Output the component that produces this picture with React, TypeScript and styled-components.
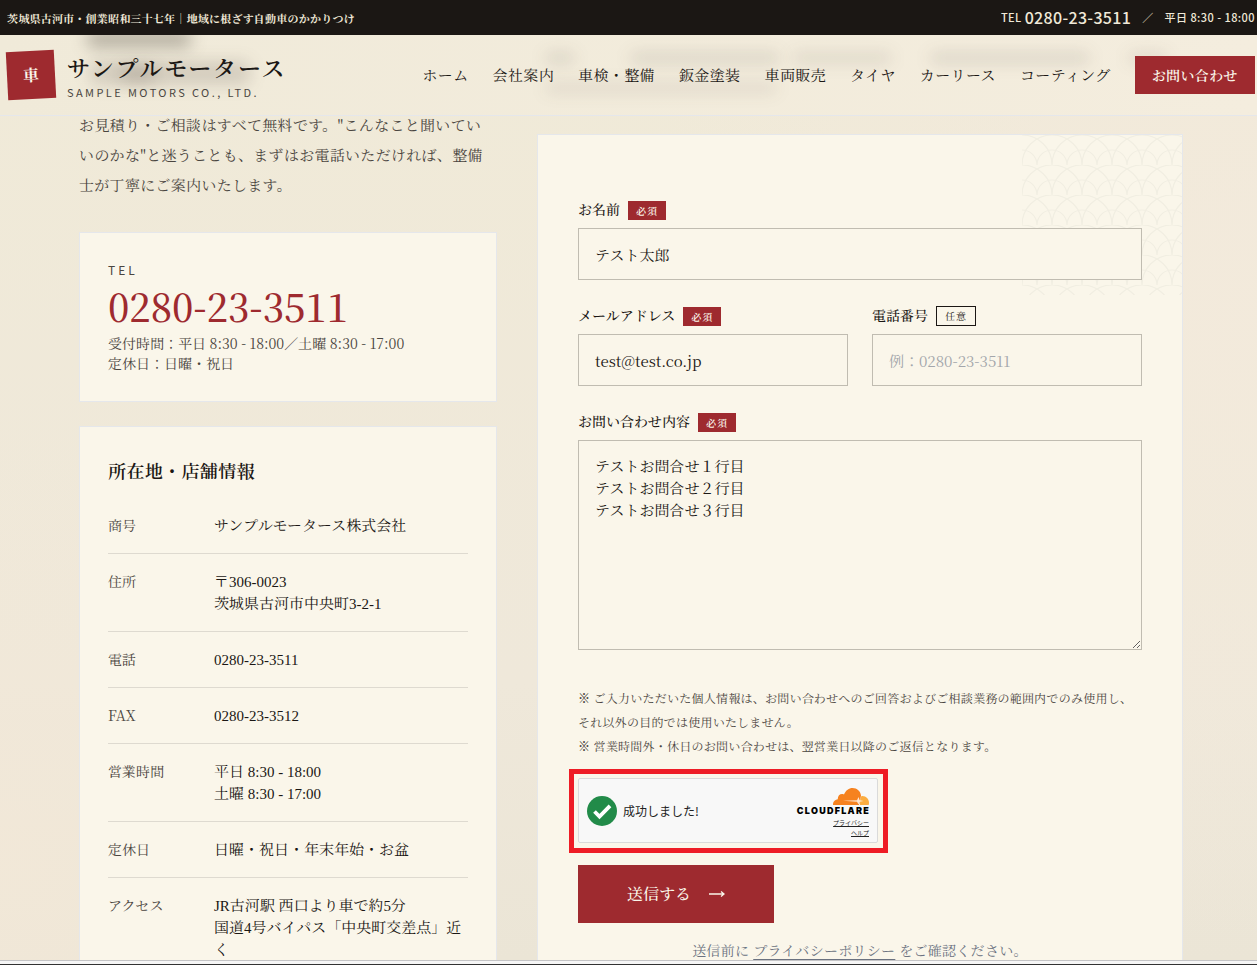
import React from 'react';
import styled, { createGlobalStyle } from 'styled-components';

const serif = `"Noto Serif JP", "Noto Serif CJK JP", "Liberation Serif", "Noto Sans CJK JP", serif`;
const tableSerif = `"Liberation Serif", "Noto Serif JP", "Noto Serif CJK JP", "Noto Sans CJK JP", serif`;
const sans = `"Noto Sans CJK JP", "Noto Sans", sans-serif`;

const c = {
  ink: '#1b1714',
  soft: '#4a4540',
  red: '#9e2a2f',
  paper: '#faf6ea',
  edge: '#e5e7eb',
  line: '#dedad0',
  field: '#c0bcb1',
};

const GlobalStyle = createGlobalStyle`
  * { box-sizing: border-box; }
  body { margin: 0; font-family: ${serif}; color: ${c.ink}; background: #f0e9d8; }
  h2, p, dl, dd { margin: 0; }
  a { color: inherit; text-decoration: none; }
`;

const Page = styled.div`
  display: flex;
  flex-direction: column;
  height: 100vh;
`;

const TopBar = styled.div`
  flex: none;
  display: flex;
  justify-content: space-between;
  align-items: center;
  height: 35px;
  padding: 0 2px 0 7px;
  background: ${c.ink};
  color: #f0e9d8;
  font: 700 11px/16px ${serif};
  letter-spacing: 0.02em;
  white-space: nowrap;
`;

const TopContact = styled.div`
  display: flex;
  align-items: center;
  gap: 3px;
  padding-bottom: 2px;
  font-family: ${sans};
  font-weight: 500;
  letter-spacing: 0.04em;
  a { font-size: 16px; line-height: 20px; letter-spacing: 0.02em; }
`;

const Slash = styled.span`
  margin: 0 8px;
`;

const Stage = styled.div`
  position: relative;
  flex: 1;
  overflow: hidden;
  background:
    radial-gradient(circle at 0% 90%, rgba(242, 232, 216, 0.9), transparent 30%),
    radial-gradient(circle at 100% 30%, rgba(243, 234, 220, 0.9), transparent 45%),
    linear-gradient(180deg, #f0ead8, #efe8da 70%, #ebe5d6);
`;

const Header = styled.header`
  position: absolute;
  inset: 0 0 auto 0;
  z-index: 2;
  display: flex;
  justify-content: space-between;
  align-items: center;
  height: 81px;
  padding: 0 2px 0 7px;
  border-bottom: 1px solid ${c.edge};
  background: linear-gradient(90deg, #f0ead9, #f4edde);
  white-space: nowrap;
  overflow: hidden;
`;

const Smudge = styled.span<{ $x: number; $y: number; $w: number; $h: number; $a: number }>`
  position: absolute;
  left: ${p => p.$x}px;
  top: ${p => p.$y}px;
  width: ${p => p.$w}px;
  height: ${p => p.$h}px;
  border-radius: 8px;
  background: rgba(60, 52, 44, ${p => p.$a});
  filter: blur(8px);
`;

const Brand = styled.a`
  position: relative;
  display: flex;
  align-items: center;
  gap: 12px;
`;

const Seal = styled.span`
  display: grid;
  place-items: center;
  width: 48px;
  height: 48px;
  background: ${c.red};
  color: #faf6ea;
  font: 700 16px/24px ${serif};
  transform: rotate(-3deg);
`;

const BrandText = styled.span`
  display: flex;
  flex-direction: column;
  padding-top: 4px;
`;

const BrandName = styled.span`
  font: 600 23px/30px ${serif};
  letter-spacing: 0.08em;
`;

const BrandSub = styled.span`
  font: 400 11px/18px ${sans};
  letter-spacing: 0.22em;
  color: ${c.soft};
`;

const Nav = styled.nav`
  position: relative;
  display: flex;
  align-items: center;
  gap: 24px;
  font-size: 15px;
  line-height: 20px;
  letter-spacing: 0.025em;
`;

const NavButton = styled.a`
  padding: 9px 17px;
  background: ${c.red};
  color: #faf6ea;
  font-size: 14px;
  font-weight: 600;
`;

const Main = styled.main`
  display: grid;
  grid-template-columns: minmax(0, 11fr) minmax(0, 17fr);
  gap: 40px;
  padding: 75px 74px 0 79px;
`;

const Side = styled.div``;

const Lead = styled.p`
  margin-bottom: 32px;
  padding-right: 8px;
  font-size: 15px;
  line-height: 30px;
  letter-spacing: 0.02em;
  color: ${c.soft};
`;

const Card = styled.section`
  margin-bottom: 24px;
  padding: 28px;
  border: 1px solid ${c.edge};
  background: ${c.paper};
`;

const TelLabel = styled.p`
  font: 400 12px/18px ${sans};
  letter-spacing: 0.25em;
  color: ${c.soft};
`;

const TelNumber = styled.a`
  display: block;
  font-size: 38px;
  font-weight: 500;
  line-height: 54px;
  color: ${c.red};
`;

const Hours = styled.p`
  font-size: 14px;
  line-height: 20px;
  color: ${c.soft};
`;

const CardTitle = styled.h2`
  margin-bottom: 13px;
  font-size: 18px;
  font-weight: 600;
  line-height: 30px;
  letter-spacing: 0.02em;
`;

const InfoRow = styled.dl`
  display: grid;
  grid-template-columns: 90px 1fr;
  gap: 16px;
  padding: 17px 0 16px;
  border-bottom: 1px solid ${c.line};
  line-height: 22px;
  dt { font-size: 14px; line-height: 20px; color: ${c.soft}; }
  dd { font-family: ${tableSerif}; font-size: 15px; }
`;

const FormCard = styled.section`
  position: relative;
  margin-top: 24px;
  padding: 63px 40px 40px;
  border: 1px solid ${c.edge};
  background: ${c.paper};
`;

const Waves = styled.svg`
  position: absolute;
  top: 0;
  right: 0;
  width: 160px;
  height: 160px;
`;

const Form = styled.form`
  position: relative;
  display: flex;
  flex-direction: column;
`;

const Pair = styled.div`
  display: grid;
  grid-template-columns: 1fr 1fr;
  gap: 24px;
`;

const Field = styled.div`
  margin-bottom: 24px;
`;

const LabelRow = styled.div`
  display: flex;
  align-items: flex-end;
  gap: 8px;
  height: 22px;
  margin-bottom: 8px;
  label { align-self: center; font-size: 14px; line-height: 22px; font-weight: 500; }
`;

const Badge = styled.span<{ $optional?: boolean }>`
  padding: ${p => (p.$optional ? '0 8px' : '1px 8px 0')};
  border: ${p => (p.$optional ? `1px solid ${c.ink}` : '0')};
  background: ${p => (p.$optional ? 'transparent' : c.red)};
  color: ${p => (p.$optional ? c.ink : '#faf6ea')};
  font-size: 10px;
  font-weight: ${p => (p.$optional ? 400 : 600)};
  line-height: 18px;
  letter-spacing: 0.1em;
`;

const Input = styled.input`
  display: block;
  width: 100%;
  height: 52px;
  padding: 0 16px;
  border: 1px solid ${c.field};
  border-radius: 0;
  background: ${c.paper};
  color: ${c.ink};
  font: 400 15px/22px ${serif};
  outline: none;
  &::placeholder { color: #a3a6ab; opacity: 1; }
`;

const TextArea = styled.textarea`
  display: block;
  width: 100%;
  height: 210px;
  padding: 14px 16px;
  border: 1px solid ${c.field};
  border-radius: 0;
  background: ${c.paper};
  color: ${c.ink};
  font: 400 15px/22px ${serif};
  outline: none;
  resize: vertical;
`;

const Notes = styled.p`
  margin: 12px 0 11px;
  font-size: 12px;
  line-height: 24px;
  letter-spacing: 0.02em;
  color: ${c.soft};
`;

const CaptchaFrame = styled.div`
  align-self: flex-start;
  margin-left: -9px;
  padding: 4px 5px 5px 4px;
  border: 5px solid #ee1c25;
`;

const Captcha = styled.div`
  display: flex;
  justify-content: space-between;
  align-items: center;
  width: 300px;
  height: 65px;
  padding: 0 8px;
  border: 1px solid #dadada;
  border-radius: 2px;
  background: #f8f8f8;
  color: #222;
  font-family: ${sans};
`;

const Status = styled.div`
  display: flex;
  align-items: center;
  gap: 6px;
  font-size: 12px;
  line-height: 20px;
`;

const Vendor = styled.div`
  display: flex;
  flex-direction: column;
  align-items: flex-end;
  padding-top: 4px;
  font-size: 6px;
  line-height: 10px;
  a { text-decoration: underline; text-underline-offset: 1px; }
`;

const VendorName = styled.span`
  margin: 1px -1px 2px 0;
  font: 900 9px/10px Inter, ${sans};
  letter-spacing: 0.14em;
  color: #000;
`;

const Submit = styled.button`
  align-self: flex-start;
  display: flex;
  justify-content: center;
  align-items: center;
  gap: 18px;
  width: 196px;
  height: 58px;
  margin-top: 12px;
  padding: 0;
  border: 0;
  background: ${c.red};
  color: #faf6ea;
  font: 500 16px/24px ${serif};
`;

const Policy = styled.p`
  margin-top: 16px;
  text-align: center;
  font-size: 14px;
  line-height: 22px;
  letter-spacing: 0.02em;
  color: #6b7280;
  a { text-decoration: underline; text-underline-offset: 3px; }
`;

const BottomEdge = styled.div`
  flex: none;
  height: 5px;
  border-top: 1px solid #c4c4c6;
  border-bottom: 1px solid #333;
  background: #f6f6f6;
`;

const navItems = ['ホーム', '会社案内', '車検・整備', '鈑金塗装', '車両販売', 'タイヤ', 'カーリース', 'コーティング'];

const info: [string, string[]][] = [
  ['商号', ['サンプルモータース株式会社']],
  ['住所', ['〒306-0023', '茨城県古河市中央町3-2-1']],
  ['電話', ['0280-23-3511']],
  ['FAX', ['0280-23-3512']],
  ['営業時間', ['平日 8:30 - 18:00', '土曜 8:30 - 17:00']],
  ['定休日', ['日曜・祝日・年末年始・お盆']],
  ['アクセス', ['JR古河駅 西口より車で約5分', '国道4号バイパス「中央町交差点」近く']],
];

const CheckIcon = () => (
  <svg width="30" height="30" viewBox="0 0 30 30" aria-hidden="true">
    <circle cx="15" cy="15" r="15" fill="#228b49" />
    <path d="M7.500 15.500l5 5L23 9.800" fill="none" stroke="#fff" strokeWidth="3.800" />
  </svg>
);

const CloudIcon = () => (
  <svg width="36" height="17" viewBox="0 0 36 17" aria-hidden="true">
    <path d="M27 17c-.5-3 .2-7 1.500-9 4-.6 7.500 2.600 7.500 7l-.3 2z" fill="#fbad41" />
    <path d="M0 17c-.3-3.300 2-5.600 4.800-5.800C4.600 7.500 7.500 5 11 6.400 12.800 2.400 16 0 19.500 0c4.600 0 8 3.300 8.500 7.600-.4 1.900-.6 3.600-1.300 5.600L26 17z" fill="#f6821f" />
    <path d="M10 12.700l14-.4 1.500-3.300 1.200 3.200 3.800.8-3.800.8-1.200 2.700-1.500-2.700z" fill="#fff" opacity=".8" />
  </svg>
);

const ArrowIcon = () => (
  <svg width="16" height="10" viewBox="0 0 16 10" fill="none" stroke="currentColor" aria-hidden="true">
    <path d="M0 5h15M12 2.500l3 2.500-3 2.500" strokeWidth="1.300" />
  </svg>
);

export default function App() {
  return (
    <Page>
      <GlobalStyle />
      <TopBar>
        <span>茨城県古河市・創業昭和三十七年｜地域に根ざす自動車のかかりつけ</span>
        <TopContact>
          <span>TEL</span>
          <a href="tel:0280233511">0280-23-3511</a>
          <Slash>／</Slash>
          <span>平日 8:30 - 18:00</span>
        </TopContact>
      </TopBar>
      <Stage>
        <Header>
          <Smudge $x={86} $y={-4} $w={106} $h={16} $a={0.34} />
          <Smudge $x={90} $y={26} $w={160} $h={24} $a={0.16} />
          <Smudge $x={120} $y={30} $w={36} $h={18} $a={0.16} />
          <Smudge $x={545} $y={18} $w={30} $h={10} $a={0.14} />
          <Smudge $x={630} $y={18} $w={150} $h={10} $a={0.14} />
          <Smudge $x={792} $y={18} $w={100} $h={10} $a={0.12} />
          <Smudge $x={930} $y={18} $w={160} $h={10} $a={0.14} />
          <Smudge $x={1128} $y={18} $w={40} $h={10} $a={0.12} />
          <Smudge $x={545} $y={48} $w={232} $h={10} $a={0.1} />
          <Brand href="#">
            <Seal>車</Seal>
            <BrandText>
              <BrandName>サンプルモータース</BrandName>
              <BrandSub>SAMPLE MOTORS CO., LTD.</BrandSub>
            </BrandText>
          </Brand>
          <Nav>
            {navItems.map(t => <a key={t} href="#">{t}</a>)}
            <NavButton href="#">お問い合わせ</NavButton>
          </Nav>
        </Header>
        <Main>
          <Side>
            <Lead>お見積り・ご相談はすべて無料です。"こんなこと聞いていいのかな"と迷うことも、まずはお電話いただければ、整備士が丁寧にご案内いたします。</Lead>
            <Card>
              <TelLabel>TEL</TelLabel>
              <TelNumber href="tel:0280233511">0280-23-3511</TelNumber>
              <Hours>受付時間：平日 8:30 - 18:00／土曜 8:30 - 17:00<br />定休日：日曜・祝日</Hours>
            </Card>
            <Card>
              <CardTitle>所在地・店舗情報</CardTitle>
              {info.map(([term, lines]) => (
                <InfoRow key={term}>
                  <dt>{term}</dt>
                  <dd>{lines.map(l => <div key={l}>{l}</div>)}</dd>
                </InfoRow>
              ))}
            </Card>
          </Side>
          <FormCard>
            <Waves aria-hidden="true">
              <defs>
                <pattern id="waves" width="30" height="30" patternUnits="userSpaceOnUse">
                  <path d="M0 0A30 30 0 0 1 30 30M0 30A30 30 0 0 1 30 0M0 15A15 15 0 0 1 15 30A15 15 0 0 1 30 15" fill="none" stroke="#f1eee2" strokeWidth="1.200" />
                </pattern>
              </defs>
              <rect width="160" height="160" fill="url(#waves)" />
            </Waves>
            <Form onSubmit={e => e.preventDefault()}>
              <Field>
                <LabelRow><label htmlFor="name">お名前</label><Badge>必須</Badge></LabelRow>
                <Input id="name" type="text" defaultValue="テスト太郎" />
              </Field>
              <Pair>
                <Field>
                  <LabelRow><label htmlFor="email">メールアドレス</label><Badge>必須</Badge></LabelRow>
                  <Input id="email" type="email" defaultValue="test@test.co.jp" />
                </Field>
                <Field>
                  <LabelRow><label htmlFor="tel">電話番号</label><Badge $optional>任意</Badge></LabelRow>
                  <Input id="tel" type="tel" placeholder="例：0280-23-3511" />
                </Field>
              </Pair>
              <Field>
                <LabelRow><label htmlFor="message">お問い合わせ内容</label><Badge>必須</Badge></LabelRow>
                <TextArea id="message" defaultValue={'テストお問合せ１行目\nテストお問合せ２行目\nテストお問合せ３行目'} />
              </Field>
              <Notes>
                ※ ご入力いただいた個人情報は、お問い合わせへのご回答およびご相談業務の範囲内でのみ使用し、それ以外の目的では使用いたしません。<br />
                ※ 営業時間外・休日のお問い合わせは、翌営業日以降のご返信となります。
              </Notes>
              <CaptchaFrame>
                <Captcha>
                  <Status><CheckIcon />成功しました!</Status>
                  <Vendor>
                    <CloudIcon />
                    <VendorName>CLOUDFLARE</VendorName>
                    <a href="#">プライバシー</a>
                    <a href="#">ヘルプ</a>
                  </Vendor>
                </Captcha>
              </CaptchaFrame>
              <Submit type="submit">送信する<ArrowIcon /></Submit>
              <Policy>送信前に <a href="#">プライバシーポリシー</a> をご確認ください。</Policy>
            </Form>
          </FormCard>
        </Main>
      </Stage>
      <BottomEdge />
    </Page>
  );
}
